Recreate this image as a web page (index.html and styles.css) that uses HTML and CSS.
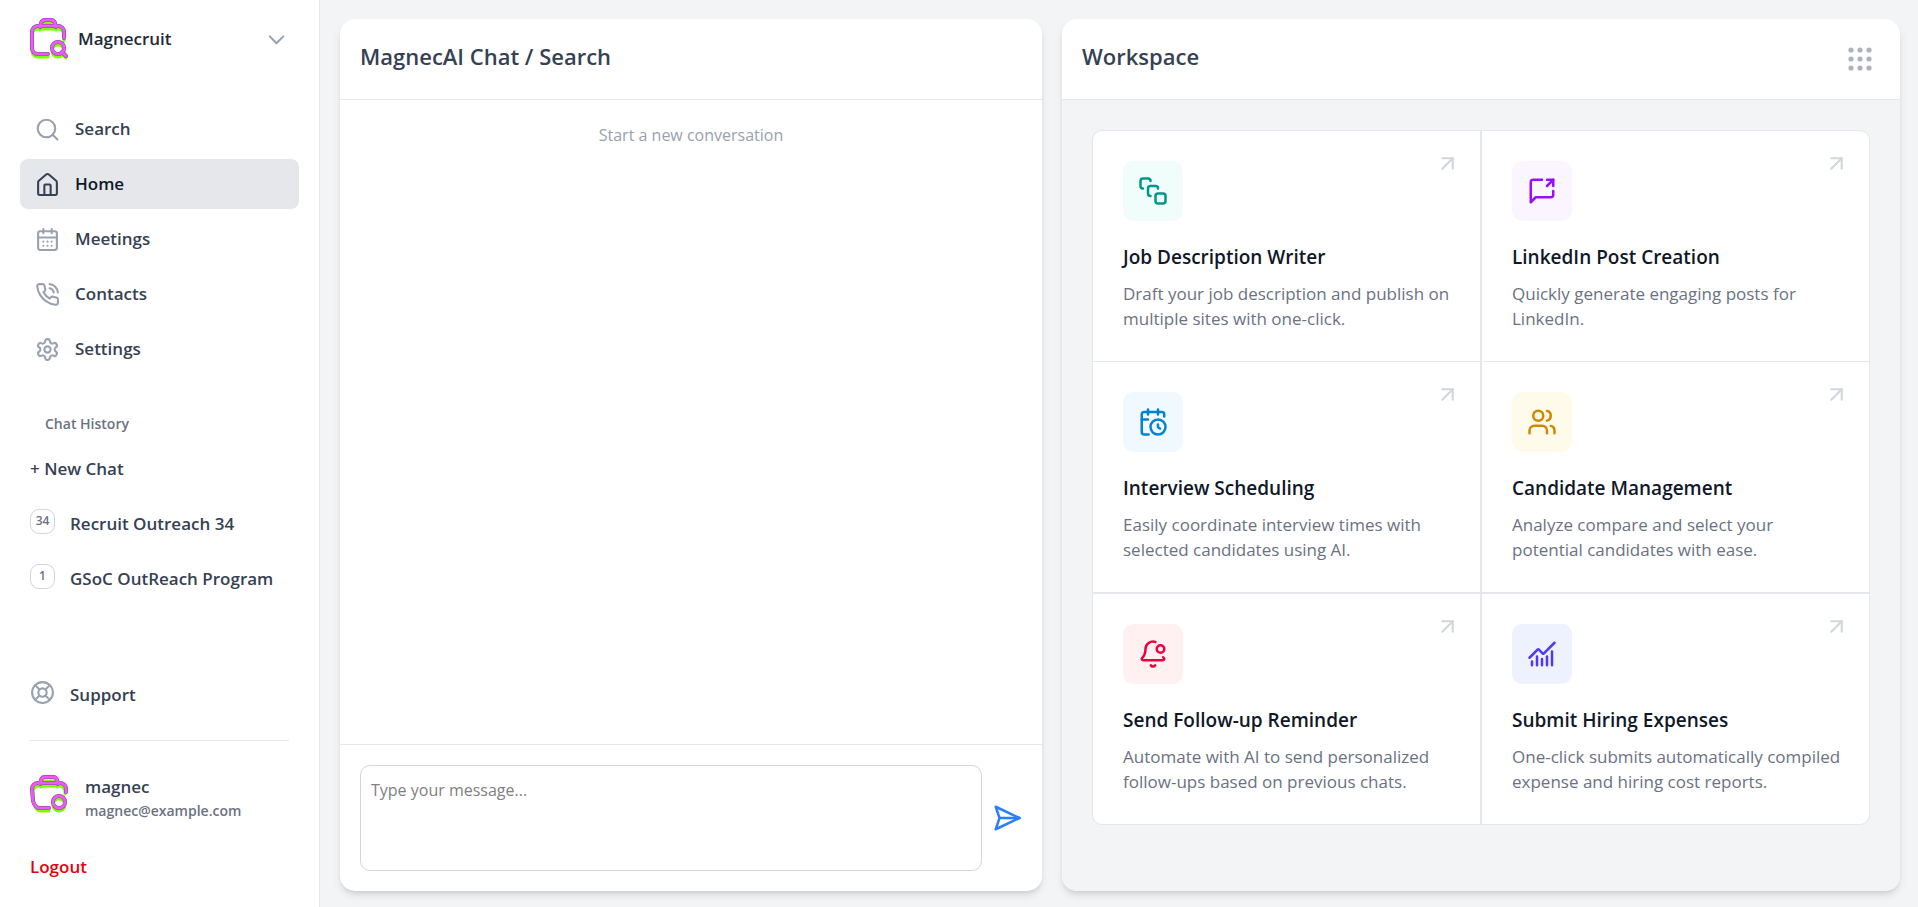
FILE: index.html
```html
<!DOCTYPE html>
<html lang="en">
<head>
<meta charset="utf-8">
<meta name="viewport" content="width=device-width, initial-scale=1">
<title>Magnecruit</title>
<link rel="stylesheet" href="styles.css">
</head>
<body>
<svg class="defs" aria-hidden="true">
  <symbol id="arrow" viewBox="0 0 24 24"><path d="M7 7h10v10"/><path d="M7 17 17 7"/></symbol>
</svg>
<div class="app">
  <aside class="sidebar">
    <button class="brand" type="button">
      <svg class="logo" viewBox="0 0 38 42" aria-hidden="true">
        <g class="logo-shade"><path d="M34 23v-6a6 6 0 0 0-6-6H8a6 6 0 0 0-6 6v16a6 6 0 0 0 6 6h10"/><path d="M10 12l1-4q1-3 4-3h6q3 0 4 3l1 4"/><circle cx="28" cy="33" r="6"/><path d="m32 36 4 4"/></g>
        <g class="logo-edge"><path d="M34 20v-6a6 6 0 0 0-6-6H8a6 6 0 0 0-6 6v16a6 6 0 0 0 6 6h10"/><path d="M10 9l1-4q1-3 4-3h6q3 0 4 3l1 4"/><circle cx="28" cy="30" r="6"/><path d="m32 34 4 4"/></g>
        <g class="logo-line"><path d="M34 20v-6a6 6 0 0 0-6-6H8a6 6 0 0 0-6 6v16a6 6 0 0 0 6 6h10"/><path d="M10 9l1-4q1-3 4-3h6q3 0 4 3l1 4"/><circle cx="28" cy="30" r="6"/><path d="m32 34 4 4"/></g>
      </svg>
      <span class="brand-name">Magnecruit</span>
      <svg class="icon" viewBox="0 0 24 24" aria-hidden="true"><path d="m5.500 9 6.500 6.500L18.500 9"/></svg>
    </button>

    <nav class="nav">
      <a class="nav-item" href="#"><svg class="icon" viewBox="0 0 24 24"><circle cx="11" cy="11" r="8.400"/><path d="m21.500 21.500-4.500-4.500"/></svg>Search</a>
      <a class="nav-item active" href="#"><svg class="icon" viewBox="0 0 24 24"><path d="M15 22v-9a1 1 0 0 0-1-1h-4a1 1 0 0 0-1 1v9"/><path d="M3 10a2 2 0 0 1 .709-1.528l7-6a2 2 0 0 1 2.582 0l7 6A2 2 0 0 1 21 10v10.500a1.500 1.500 0 0 1-1.500 1.500h-15a1.500 1.500 0 0 1-1.500-1.500z"/></svg>Home</a>
      <a class="nav-item" href="#"><svg class="icon" viewBox="0 0 24 24"><path d="M8 2v4M16 2v4"/><rect x="3" y="4" width="18" height="18" rx="2"/><path d="M3 10h18M8 14h.01M12 14h.01M16 14h.01M8 18h.01M12 18h.01M16 18h.01"/></svg>Meetings</a>
      <a class="nav-item" href="#"><svg class="icon" viewBox="0 0 24 24"><path d="M22 16.920v3a2 2 0 0 1-2.180 2 19.790 19.790 0 0 1-8.630-3.070 19.500 19.500 0 0 1-6-6 19.790 19.790 0 0 1-3.070-8.670A2 2 0 0 1 4.110 2h3a2 2 0 0 1 2 1.720 12.840 12.840 0 0 0 .7 2.810 2 2 0 0 1-.45 2.110L8.090 9.910a16 16 0 0 0 6 6l1.270-1.270a2 2 0 0 1 2.110-.45 12.840 12.840 0 0 0 2.810.7A2 2 0 0 1 22 16.920z"/><path d="M14 2a9 9 0 0 1 8 8"/><path d="M14 6a5 5 0 0 1 4 4"/></svg>Contacts</a>
      <a class="nav-item" href="#"><svg class="icon" viewBox="0 0 24 24"><path d="M12.220 2h-.44a2 2 0 0 0-2 2v.18a2 2 0 0 1-1 1.730l-.43.25a2 2 0 0 1-2 0l-.15-.08a2 2 0 0 0-2.730.73l-.22.38a2 2 0 0 0 .73 2.730l.15.1a2 2 0 0 1 1 1.720v.51a2 2 0 0 1-1 1.740l-.15.09a2 2 0 0 0-.73 2.730l.22.38a2 2 0 0 0 2.730.73l.15-.08a2 2 0 0 1 2 0l.43.25a2 2 0 0 1 1 1.730V20a2 2 0 0 0 2 2h.44a2 2 0 0 0 2-2v-.18a2 2 0 0 1 1-1.730l.43-.25a2 2 0 0 1 2 0l.15.08a2 2 0 0 0 2.730-.73l.22-.39a2 2 0 0 0-.73-2.730l-.15-.08a2 2 0 0 1-1-1.740v-.5a2 2 0 0 1 1-1.740l.15-.09a2 2 0 0 0 .73-2.730l-.22-.38a2 2 0 0 0-2.730-.73l-.15.08a2 2 0 0 1-2 0l-.43-.25a2 2 0 0 1-1-1.730V4a2 2 0 0 0-2-2z"/><circle cx="12" cy="12" r="3"/></svg>Settings</a>
    </nav>

    <section class="history">
      <h2 class="history-title">Chat History</h2>
      <button class="new-chat" type="button">+ New Chat</button>
      <a class="row" href="#"><span class="badge">34</span>Recruit Outreach 34</a>
      <a class="row" href="#"><span class="badge">1</span>GSoC OutReach Program</a>
    </section>

    <div class="bottom">
      <a class="row" href="#"><svg class="icon" viewBox="0 0 24 24"><circle cx="12" cy="12" r="10"/><path d="m4.930 4.930 4.240 4.240M14.830 9.170l4.240-4.240M14.830 14.830l4.240 4.240M9.170 14.830l-4.240 4.240"/><circle cx="12" cy="12" r="4"/></svg>Support</a>
      <hr class="rule">
      <div class="account">
        <svg class="avatar" viewBox="0 0 38 38" aria-hidden="true">
          <g class="logo-shade"><path d="M35 19v-2a6 6 0 0 0-6-6H9a6 6 0 0 0-6 6l1 12q2 7 7 7h8"/><path d="M11 12l1-3q1-3 4-3h6q3 0 4 3l1 3"/><circle cx="29" cy="30" r="6"/></g>
          <g class="logo-edge"><path d="M36 17v-3a6 6 0 0 0-6-6H8a6 6 0 0 0-6 6l1 12q2 7 7 7h9"/><path d="M10 9l1-4q1-3 4-3h8q3 0 4 3l1 4"/><circle cx="29" cy="27" r="6"/></g>
          <g class="logo-line"><path d="M36 17v-3a6 6 0 0 0-6-6H8a6 6 0 0 0-6 6l1 12q2 7 7 7h9"/><path d="M10 9l1-4q1-3 4-3h8q3 0 4 3l1 4"/><circle cx="29" cy="27" r="6"/></g>
        </svg>
        <div>
          <p class="account-name">magnec</p>
          <p class="account-mail">magnec@example.com</p>
        </div>
      </div>
      <button class="logout" type="button">Logout</button>
    </div>
  </aside>

  <main class="main">
    <section class="panel chat">
      <header class="panel-head"><h1 class="panel-title">MagnecAI Chat / Search</h1></header>
      <div class="messages"><p class="empty">Start a new conversation</p></div>
      <form class="composer">
        <textarea class="message" aria-label="Message" placeholder="Type your message..."></textarea>
        <button class="send" type="button" aria-label="Send"><svg viewBox="0 0 24 24"><path d="m3 3 3 9-3 9 19-9Z"/><path d="M6 12h16"/></svg></button>
      </form>
    </section>

    <section class="panel workspace">
      <header class="panel-head">
        <h1 class="panel-title">Workspace</h1>
        <button class="apps" type="button" aria-label="Apps"><svg viewBox="0 0 24 24"><circle cx="3" cy="3" r="2.600"/><circle cx="12" cy="3" r="2.600"/><circle cx="21" cy="3" r="2.600"/><circle cx="3" cy="12" r="2.600"/><circle cx="12" cy="12" r="2.600"/><circle cx="21" cy="12" r="2.600"/><circle cx="3" cy="21" r="2.600"/><circle cx="12" cy="21" r="2.600"/><circle cx="21" cy="21" r="2.600"/></svg></button>
      </header>
      <div class="workspace-body">
        <div class="cards">
          <a class="card" href="#">
            <span class="tile teal"><svg viewBox="0 0 24 24"><path d="M4 10c-1.100 0-2-.9-2-2V4c0-1.100.9-2 2-2h4c1.100 0 2 .9 2 2"/><path d="M10 16c-1.100 0-2-.9-2-2v-4c0-1.100.9-2 2-2h4c1.100 0 2 .9 2 2"/><rect x="14" y="14" width="8" height="8" rx="2"/></svg></span>
            <svg class="arrow"><use href="#arrow"/></svg>
            <h3 class="card-title">Job Description Writer</h3>
            <p class="card-text">Draft your job description and publish on multiple sites with one-click.</p>
          </a>
          <a class="card" href="#">
            <span class="tile purple"><svg viewBox="0 0 24 24"><path d="M21 12v3a2 2 0 0 1-2 2H7l-4 4V5a2 2 0 0 1 2-2h7"/><path d="M16 3h5v5"/><path d="m16 8 5-5"/></svg></span>
            <svg class="arrow"><use href="#arrow"/></svg>
            <h3 class="card-title">LinkedIn Post Creation</h3>
            <p class="card-text">Quickly generate engaging posts for LinkedIn.</p>
          </a>
          <a class="card" href="#">
            <span class="tile sky"><svg viewBox="0 0 24 24"><path d="M21 7.500V6a2 2 0 0 0-2-2H5a2 2 0 0 0-2 2v14a2 2 0 0 0 2 2h3.500"/><path d="M16 2v4M8 2v4M3 10h5"/><path d="M16 14v2.200l1.600 1"/><circle cx="16" cy="16" r="6"/></svg></span>
            <svg class="arrow"><use href="#arrow"/></svg>
            <h3 class="card-title">Interview Scheduling</h3>
            <p class="card-text">Easily coordinate interview times with selected candidates using AI.</p>
          </a>
          <a class="card" href="#">
            <span class="tile yellow"><svg viewBox="0 0 24 24"><path d="M16 21v-2a4 4 0 0 0-4-4H6a4 4 0 0 0-4 4v2"/><circle cx="9" cy="7" r="4"/><path d="M22 21v-2a4 4 0 0 0-3-3.870"/><path d="M16 3.130a4 4 0 0 1 0 7.750"/></svg></span>
            <svg class="arrow"><use href="#arrow"/></svg>
            <h3 class="card-title">Candidate Management</h3>
            <p class="card-text">Analyze compare and select your potential candidates with ease.</p>
          </a>
          <a class="card last-row" href="#">
            <span class="tile rose"><svg viewBox="0 0 24 24"><path d="M10.268 21a2 2 0 0 0 3.464 0"/><path d="M13.916 2.314A6 6 0 0 0 6 8c0 4.499-1.411 5.956-2.740 7.327A1 1 0 0 0 4 17h16a1 1 0 0 0 .74-1.673 9 9 0 0 1-.585-.665"/><circle cx="18" cy="8" r="3"/></svg></span>
            <svg class="arrow"><use href="#arrow"/></svg>
            <h3 class="card-title">Send Follow-up Reminder</h3>
            <p class="card-text">Automate with AI to send personalized follow-ups based on previous chats.</p>
          </a>
          <a class="card last-row" href="#">
            <span class="tile indigo"><svg viewBox="0 0 24 24"><path d="M12 16v5M16 14v7M20 10v11M4 18v3M8 14v7"/><path d="m22 3-8.646 8.646a.5.5 0 0 1-.708 0L9.354 8.354a.5.5 0 0 0-.707 0L2 15"/></svg></span>
            <svg class="arrow"><use href="#arrow"/></svg>
            <h3 class="card-title">Submit Hiring Expenses</h3>
            <p class="card-text">One-click submits automatically compiled expense and hiring cost reports.</p>
          </a>
        </div>
      </div>
    </section>
  </main>
</div>
</body>
</html>
```
FILE: styles.css
```css
*, *::before, *::after { box-sizing: border-box; }
body, h1, h2, h3, p { margin: 0; }
body {
  font-family: "Segoe UI", "Open Sans", "Noto Sans", sans-serif;
  font-size: 17px;
  line-height: 24px;
  color: #364153;
  background: #f3f4f6;
}
a { color: inherit; text-decoration: none; }
button { padding: 0; border: 0; background: none; font: inherit; color: inherit; text-align: left; cursor: pointer; }
svg { flex: none; fill: none; stroke: currentColor; stroke-width: 2; stroke-linecap: round; stroke-linejoin: round; }
.defs { display: none; }

.app { display: flex; min-height: 100vh; }

/* Sidebar */
.sidebar {
  display: flex;
  flex-direction: column;
  width: 320px;
  flex: none;
  background: #fff;
  border-right: 1px solid #e5e7eb;
  font-weight: 600;
}
.brand { display: flex; align-items: center; gap: 10px; padding: 18px 30px 0; color: #1e2939; }
.logo { width: 38px; height: 42px; }
.avatar { width: 38px; height: 38px; }
.logo, .avatar { overflow: visible; }
.logo-shade { stroke: #7cff00; stroke-width: 3; }
.logo-edge { stroke: #8a3b9a; stroke-width: 4; }
.logo-line { stroke: #e85df0; stroke-width: 3; }
.brand-name { flex: 1; }
.icon { width: 25px; height: 25px; color: #99a1af; }

.nav { display: flex; flex-direction: column; gap: 5px; padding: 44px 20px 0; }
.nav-item { display: flex; align-items: center; gap: 15px; height: 50px; padding: 0 15px; border-radius: 8px; }
.nav-item.active { background: #e5e7eb; color: #101828; }
.nav-item.active .icon { color: #364153; }

.history { display: flex; flex-direction: column; padding: 38px 30px 0; }
.history-title { padding-left: 15px; font-size: 14px; font-weight: 600; color: #6a7282; }
.new-chat { height: 50px; margin-top: 8px; }
.row { display: flex; align-items: center; gap: 15px; height: 50px; }
.history .row { margin-top: 5px; }
.badge {
  display: flex;
  align-items: center;
  justify-content: center;
  width: 25px;
  height: 25px;
  margin-bottom: 6px;
  border: 1px solid #d1d5dc;
  border-radius: 9px;
  background: #fff;
  color: #6a7282;
  font-size: 12px;
}

.bottom { display: flex; flex-direction: column; margin-top: auto; padding: 0 30px 28px; }
.bottom .icon { margin-bottom: 5px; }
.rule { width: 100%; height: 1px; margin: 20px 0 34px; border: 0; background: #e5e7eb; }
.account { display: flex; align-items: flex-start; gap: 17px; }
.account-mail { font-size: 14px; color: #6a7282; }
.logout { margin-top: 32px; color: #e7000b; }

/* Panels */
.main { flex: 1; display: grid; grid-template-columns: 702fr 838fr; gap: 20px; min-width: 0; padding: 19px 18px 16px 20px; }
.panel {
  display: flex;
  flex-direction: column;
  min-width: 0;
  overflow: hidden;
  border-radius: 15px;
  background: #fff;
  box-shadow: 0 5px 8px -1px rgb(0 0 0 / 0.1), 0 3px 5px -2px rgb(0 0 0 / 0.1);
}
.panel-head { display: flex; justify-content: space-between; height: 81px; padding: 20px; border-bottom: 1px solid #e5e7eb; }
.panel-title { font-size: 22px; line-height: 35px; font-weight: 600; }
.apps { display: flex; align-items: center; padding: 0 8px; color: #adb3bd; }
.apps svg { width: 24px; height: 24px; fill: currentColor; stroke: none; }

.messages { flex: 1; padding: 23px 20px; }
.empty { text-align: center; font-size: 16px; color: #99a1af; }
.composer { display: flex; align-items: center; gap: 10px; padding: 20px; border-top: 1px solid #e5e7eb; }
.message {
  flex: 1;
  height: 106px;
  padding: 12px 10px;
  border: 1px solid #d1d5dc;
  border-radius: 10px;
  outline: 0;
  resize: none;
  font: inherit;
  font-size: 16px;
}
.message::placeholder { color: #808080; }
.send { display: flex; color: #2b7fff; }
.send svg { width: 30px; height: 30px; }

/* Workspace cards */
.workspace-body { flex: 1; padding: 30px; background: #f3f4f6; }
.cards {
  display: grid;
  grid-template-columns: 1fr 1fr;
  gap: 1px 2px;
  overflow: hidden;
  border: 1px solid #e5e7eb;
  border-radius: 10px;
  background: #e5e7eb;
}
.card { position: relative; padding: 30px 25px 30px 30px; background: #fff; }
.card.last-row { border-top: 1px solid #e5e7eb; }
.tile { display: flex; align-items: center; justify-content: center; width: 60px; height: 60px; border-radius: 10px; }
.tile svg { width: 30px; height: 30px; }
.arrow { position: absolute; top: 20px; right: 20px; width: 25px; height: 25px; color: #d1d5dc; }
.card-title { margin-top: 24px; font-size: 19px; line-height: 25px; font-weight: 600; color: #101828; }
.card-text { margin-top: 11px; line-height: 25px; color: #6a7282; }
.teal { background: #f0fdfa; color: #009689; }
.purple { background: #faf5ff; color: #9810fa; }
.sky { background: #f0f9ff; color: #0084d1; }
.yellow { background: #fffbeb; color: #d08700; }
.rose { background: #fff1f2; color: #ec003f; }
.indigo { background: #eef2ff; color: #4f39f6; }
```
